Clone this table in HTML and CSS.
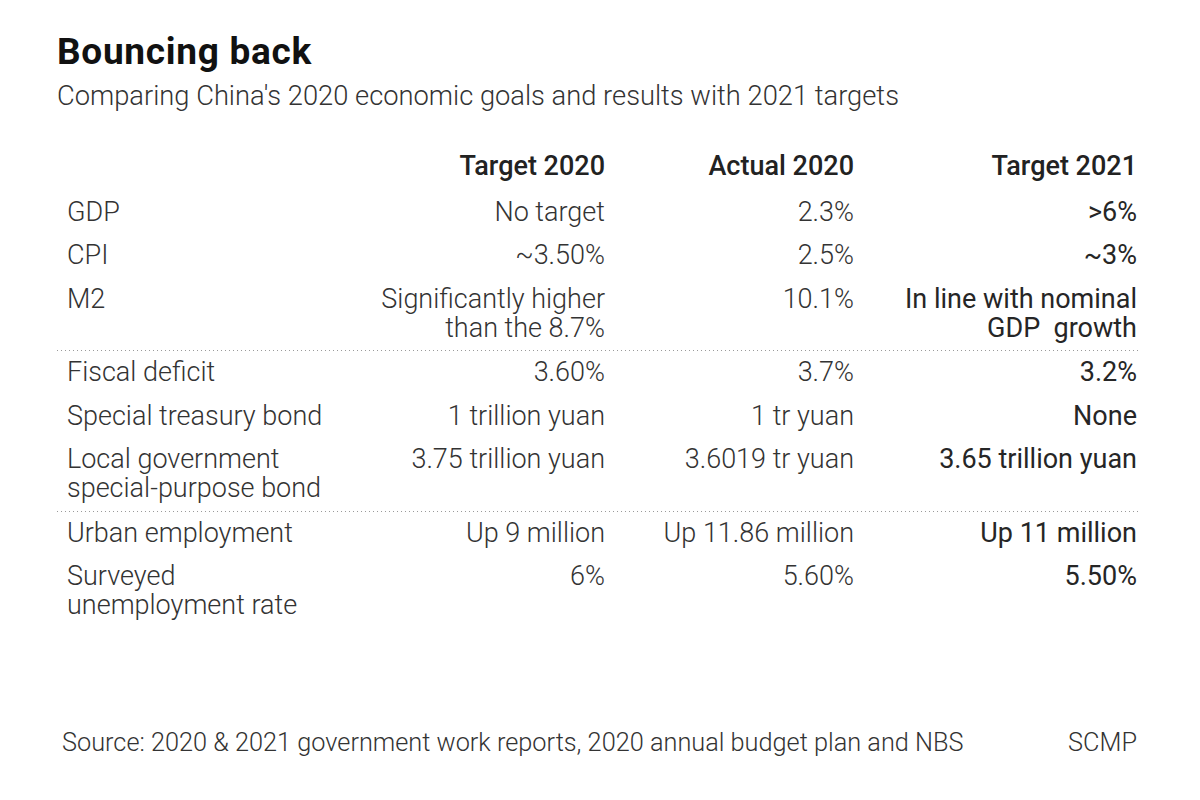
FILE: index.html
```html
<!DOCTYPE html>
<html lang="en">
<head>
<meta charset="utf-8">
<title>Bouncing back</title>
<link rel="stylesheet" href="styles.css">
</head>
<body>
<main class="graphic">
  <header class="head">
    <h1 class="title">Bouncing back</h1>
    <p class="subtitle">Comparing China's 2020 economic goals and results with 2021 targets</p>
  </header>

  <section class="table">
    <div class="row row-head">
      <div class="label"></div>
      <div class="cell">Target 2020</div>
      <div class="cell">Actual 2020</div>
      <div class="cell">Target 2021</div>
    </div>

    <div class="group">
      <div class="row">
        <div class="label">GDP</div>
        <div class="cell">No target</div>
        <div class="cell">2.3%</div>
        <div class="cell strong">&gt;6%</div>
      </div>
      <div class="row">
        <div class="label">CPI</div>
        <div class="cell">~3.50%</div>
        <div class="cell">2.5%</div>
        <div class="cell strong">~3%</div>
      </div>
      <div class="row">
        <div class="label">M2</div>
        <div class="cell">Significantly higher<br>than the 8.7%</div>
        <div class="cell">10.1%</div>
        <div class="cell strong">In line with nominal<br>GDP&nbsp; growth</div>
      </div>
    </div>

    <div class="group dotted">
      <div class="row">
        <div class="label">Fiscal deficit</div>
        <div class="cell">3.60%</div>
        <div class="cell">3.7%</div>
        <div class="cell strong">3.2%</div>
      </div>
      <div class="row">
        <div class="label">Special treasury bond</div>
        <div class="cell">1 trillion yuan</div>
        <div class="cell">1 tr yuan</div>
        <div class="cell strong">None</div>
      </div>
      <div class="row">
        <div class="label">Local government<br>special-purpose bond</div>
        <div class="cell">3.75 trillion yuan</div>
        <div class="cell">3.6019 tr yuan</div>
        <div class="cell strong">3.65 trillion yuan</div>
      </div>
    </div>

    <div class="group dotted">
      <div class="row">
        <div class="label">Urban employment</div>
        <div class="cell">Up 9 million</div>
        <div class="cell">Up 11.86 million</div>
        <div class="cell strong">Up 11 million</div>
      </div>
      <div class="row">
        <div class="label">Surveyed<br>unemployment rate</div>
        <div class="cell">6%</div>
        <div class="cell">5.60%</div>
        <div class="cell strong">5.50%</div>
      </div>
    </div>
  </section>

  <footer class="foot">
    <span class="source">Source: 2020 &amp; 2021 government work reports, 2020 annual budget plan and NBS</span>
    <span class="credit">SCMP</span>
  </footer>
</main>
</body>
</html>
```

FILE: styles.css
```css
* {
  box-sizing: border-box;
}

html, body {
  margin: 0;
  padding: 0;
  background: #ffffff;
}

body {
  font-family: Roboto, "Liberation Sans", sans-serif;
  color: #333333;
  width: 1200px;
  height: 800px;
  overflow: hidden;
}

.graphic {
  width: 1200px;
  height: 800px;
  padding: 30px 60px 0 57px;
  display: flex;
  flex-direction: column;
}

.head {
  display: flex;
  flex-direction: column;
}

.title {
  margin: 0;
  font-size: 37px;
  font-weight: 700;
  letter-spacing: 0.7px;
  line-height: 44px;
  color: #111111;
}

.subtitle {
  margin: 7px 0 0;
  font-size: 27.3px;
  font-weight: 300;
  line-height: 30px;
  color: #333333;
}

.table {
  margin-top: 34px;
  display: flex;
  flex-direction: column;
}

.row {
  display: grid;
  grid-template-columns: 288px 250px 249px 283px;
  padding: 7px 3px 7.5px 10px;
  font-size: 27px;
  line-height: 29px;
  font-weight: 300;
  color: #333333;
}

.row-head {
  font-weight: 500;
  color: #222222;
  padding-bottom: 9.5px;
}

.label {
  text-align: left;
  white-space: nowrap;
}

.cell {
  text-align: right;
  white-space: nowrap;
}

.cell.strong {
  font-weight: 400;
  color: #262626;
}

.row-head .cell {
  font-weight: 500;
}

.group {
  display: flex;
  flex-direction: column;
}

.group.dotted {
  background-image: linear-gradient(to right, #9a9a9a 1px, transparent 1px);
  background-size: 4px 1px;
  background-repeat: repeat-x;
  background-position: 0 0;
  padding-top: 1px;
}

.foot {
  margin-top: auto;
  margin-bottom: 43px;
  padding: 0 3px 0 5px;
  display: flex;
  justify-content: space-between;
  align-items: baseline;
  font-size: 25.3px;
  font-weight: 300;
  color: #333333;
  line-height: 28px;
}
```
